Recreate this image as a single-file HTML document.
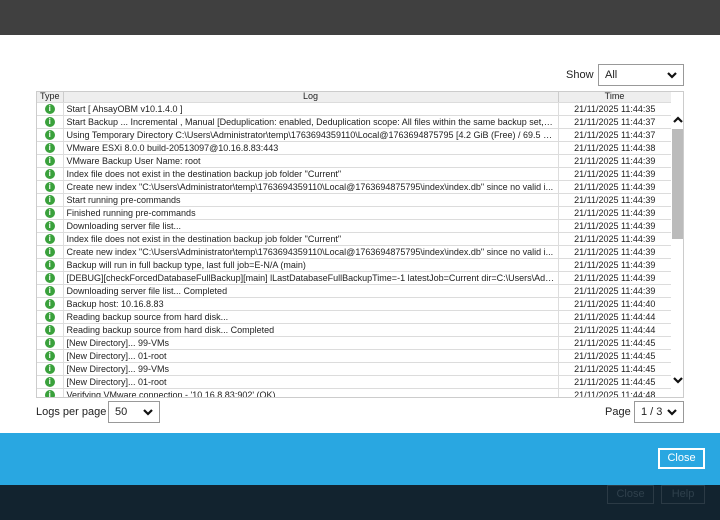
<!DOCTYPE html>
<html><head><meta charset="utf-8"><style>
*{margin:0;padding:0;box-sizing:border-box}
body{width:720px;height:520px;overflow:hidden;background:#fff;font-family:"Liberation Sans","DejaVu Sans",sans-serif;position:relative;color:#222}
.abs{position:absolute}
.top{left:0;top:0;width:720px;height:35px;background:#404040}
.blue{left:0;top:433px;width:720px;height:52px;background:#29a7e1}
.dark{left:0;top:485px;width:720px;height:35px;background:#12232f}
.sel{border:1px solid #999;background:#fff;font-size:11px;padding:0 0 0 6px;line-height:20px}
.chev{position:absolute;right:6px;top:6px}
table{border-collapse:collapse;table-layout:fixed;font-size:9px}
td,th{height:13px;padding:0 3px;white-space:nowrap;overflow:hidden;text-overflow:ellipsis;border-bottom:1px solid #dcdcdc;line-height:12px}
th{height:10px;background:#eee;font-weight:normal;border-right:1px solid #ccc;line-height:9px}
td.t{text-align:center;border-right:1px solid #ddd}
td.l{border-right:1px solid #ddd}
td.tm{text-align:center}
.ic{display:inline-block;width:10px;height:10px;border-radius:50%;background:#3aa13c;color:#fff;font-size:8px;font-weight:bold;line-height:10px;text-align:center;vertical-align:middle}
.btn{border:1px solid;font-size:11px;text-align:center}
</style></head><body>
<div class="abs top"></div>
<div class="abs" style="left:566px;top:69px;font-size:11px">Show</div>
<div class="abs sel" style="left:598px;top:64px;width:86px;height:22px">All<svg class="chev" width="10" height="8" viewBox="0 0 10 8"><path d="M1 2l4 4 4-4" stroke="#111" stroke-width="2.2" fill="none"/></svg></div>
<div class="abs" style="left:36px;top:91px;width:648px;height:307px;border:1px solid #ccc;overflow:hidden">
<table style="width:634px">
<colgroup><col style="width:26px"><col style="width:495px"><col style="width:113px"></colgroup>
<tr><th>Type</th><th>Log</th><th>Time</th></tr>
<tr><td class="t"><span class="ic">i</span></td><td class="l">Start [ AhsayOBM v10.1.4.0 ]</td><td class="tm">21/11/2025 11:44:35</td></tr>
<tr><td class="t"><span class="ic">i</span></td><td class="l">Start Backup ... Incremental , Manual [Deduplication: enabled, Deduplication scope: All files within the same backup set, M...</td><td class="tm">21/11/2025 11:44:37</td></tr>
<tr><td class="t"><span class="ic">i</span></td><td class="l">Using Temporary Directory C:\Users\Administrator\temp\1763694359110\Local@1763694875795 [4.2 GiB (Free) / 69.5 G...</td><td class="tm">21/11/2025 11:44:37</td></tr>
<tr><td class="t"><span class="ic">i</span></td><td class="l">VMware ESXi 8.0.0 build-20513097@10.16.8.83:443</td><td class="tm">21/11/2025 11:44:38</td></tr>
<tr><td class="t"><span class="ic">i</span></td><td class="l">VMware Backup User Name: root</td><td class="tm">21/11/2025 11:44:39</td></tr>
<tr><td class="t"><span class="ic">i</span></td><td class="l">Index file does not exist in the destination backup job folder "Current"</td><td class="tm">21/11/2025 11:44:39</td></tr>
<tr><td class="t"><span class="ic">i</span></td><td class="l">Create new index "C:\Users\Administrator\temp\1763694359110\Local@1763694875795\index\index.db" since no valid i...</td><td class="tm">21/11/2025 11:44:39</td></tr>
<tr><td class="t"><span class="ic">i</span></td><td class="l">Start running pre-commands</td><td class="tm">21/11/2025 11:44:39</td></tr>
<tr><td class="t"><span class="ic">i</span></td><td class="l">Finished running pre-commands</td><td class="tm">21/11/2025 11:44:39</td></tr>
<tr><td class="t"><span class="ic">i</span></td><td class="l">Downloading server file list...</td><td class="tm">21/11/2025 11:44:39</td></tr>
<tr><td class="t"><span class="ic">i</span></td><td class="l">Index file does not exist in the destination backup job folder "Current"</td><td class="tm">21/11/2025 11:44:39</td></tr>
<tr><td class="t"><span class="ic">i</span></td><td class="l">Create new index "C:\Users\Administrator\temp\1763694359110\Local@1763694875795\index\index.db" since no valid i...</td><td class="tm">21/11/2025 11:44:39</td></tr>
<tr><td class="t"><span class="ic">i</span></td><td class="l">Backup will run in full backup type, last full job=E-N/A (main)</td><td class="tm">21/11/2025 11:44:39</td></tr>
<tr><td class="t"><span class="ic">i</span></td><td class="l">[DEBUG][checkForcedDatabaseFullBackup][main] lLastDatabaseFullBackupTime=-1 latestJob=Current dir=C:\Users\Admi...</td><td class="tm">21/11/2025 11:44:39</td></tr>
<tr><td class="t"><span class="ic">i</span></td><td class="l">Downloading server file list... Completed</td><td class="tm">21/11/2025 11:44:39</td></tr>
<tr><td class="t"><span class="ic">i</span></td><td class="l">Backup host: 10.16.8.83</td><td class="tm">21/11/2025 11:44:40</td></tr>
<tr><td class="t"><span class="ic">i</span></td><td class="l">Reading backup source from hard disk...</td><td class="tm">21/11/2025 11:44:44</td></tr>
<tr><td class="t"><span class="ic">i</span></td><td class="l">Reading backup source from hard disk... Completed</td><td class="tm">21/11/2025 11:44:44</td></tr>
<tr><td class="t"><span class="ic">i</span></td><td class="l">[New Directory]... 99-VMs</td><td class="tm">21/11/2025 11:44:45</td></tr>
<tr><td class="t"><span class="ic">i</span></td><td class="l">[New Directory]... 01-root</td><td class="tm">21/11/2025 11:44:45</td></tr>
<tr><td class="t"><span class="ic">i</span></td><td class="l">[New Directory]... 99-VMs</td><td class="tm">21/11/2025 11:44:45</td></tr>
<tr><td class="t"><span class="ic">i</span></td><td class="l">[New Directory]... 01-root</td><td class="tm">21/11/2025 11:44:45</td></tr>
<tr><td class="t"><span class="ic">i</span></td><td class="l">Verifying VMware connection - '10.16.8.83:902' (OK)</td><td class="tm">21/11/2025 11:44:48</td></tr>
</table>
<div class="abs" style="left:634px;top:0;width:13px;height:305px;background:#fff"></div>
<svg class="abs" style="left:636px;top:24px" width="10" height="8" viewBox="0 0 10 8"><path d="M1 6l4-4 4 4" stroke="#111" stroke-width="2.2" fill="none"/></svg>
<div class="abs" style="left:635px;top:37px;width:12px;height:110px;background:#bbb"></div>
<svg class="abs" style="left:636px;top:284px" width="10" height="8" viewBox="0 0 10 8"><path d="M1 2l4 4 4-4" stroke="#111" stroke-width="2.2" fill="none"/></svg>
</div>
<div class="abs" style="left:36px;top:406px;font-size:11px">Logs per page</div>
<div class="abs sel" style="left:108px;top:401px;width:52px;height:22px">50<svg class="chev" width="10" height="8" viewBox="0 0 10 8"><path d="M1 2l4 4 4-4" stroke="#111" stroke-width="2.2" fill="none"/></svg></div>
<div class="abs" style="left:605px;top:406px;font-size:11px">Page</div>
<div class="abs sel" style="left:634px;top:401px;width:50px;height:22px">1 / 3<svg class="chev" width="10" height="8" viewBox="0 0 10 8"><path d="M1 2l4 4 4-4" stroke="#111" stroke-width="2.2" fill="none"/></svg></div>
<div class="abs blue"></div>
<div class="abs btn" style="left:658px;top:448px;width:47px;height:21px;border-color:#fff;border-width:2px;color:#fff;line-height:17px">Close</div>
<div class="abs dark"></div>
<div class="abs btn" style="left:607px;top:485px;width:47px;height:19px;border-color:#2b3a45;color:#2f404c;line-height:17px">Close</div>
<div class="abs btn" style="left:661px;top:485px;width:44px;height:19px;border-color:#2b3a45;color:#2f404c;line-height:17px">Help</div>
</body></html>
